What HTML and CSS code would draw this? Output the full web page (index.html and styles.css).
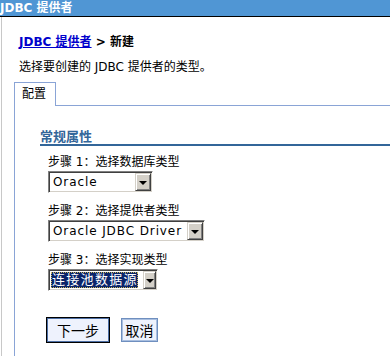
FILE: index.html
```html
<!DOCTYPE html>
<html>
<head>
<meta charset="utf-8">
<link rel="stylesheet" href="styles.css">
</head>
<body>
<div class="titlebar">JDBC 提供者</div>
<div class="page">
  <div class="crumb"><a href="#">JDBC 提供者</a> &gt; 新建</div>
  <div class="desc">选择要创建的 JDBC 提供者的类型。</div>
  <div class="tabs"><div class="tab">配置</div><div class="tabfill"></div></div>
  <div class="panel">
    <div class="heading">常规属性</div>
    <div class="field first">
      <div class="label">步骤 1：选择数据库类型</div>
      <div class="select w1"><span class="val">Oracle</span><span class="drop"><span class="tri"></span></span></div>
    </div>
    <div class="field">
      <div class="label">步骤 2：选择提供者类型</div>
      <div class="select w2"><span class="val">Oracle JDBC Driver</span><span class="drop"><span class="tri"></span></span></div>
    </div>
    <div class="field">
      <div class="label">步骤 3：选择实现类型</div>
      <div class="select w3"><span class="val sel"><span class="focus">连接池数据源</span></span><span class="drop"><span class="tri"></span></span></div>
    </div>
    <div class="buttons">
      <button class="btn primary">下一步</button>
      <button class="btn">取消</button>
    </div>
  </div>
</div>
</body>
</html>
```

FILE: styles.css
```css
html, body {
  margin: 0;
  height: 100%;
}
body {
  font-family: "DejaVu Sans", "Noto Sans CJK SC", sans-serif;
  font-size: 12px;
  background: #fff;
  color: #000;
  overflow: hidden;
}
.titlebar {
  height: 16px;
  line-height: 16px;
  background: #5096d4;
  border-bottom: 1px solid #000;
  color: #fff;
  font-weight: bold;
  font-size: 12px;
}
.page {
  margin-left: 1px;
  border-left: 1px solid #c8c8c8;
  height: 339px;
  padding-left: 17px;
}
.crumb {
  padding-top: 17px;
  line-height: 16px;
  font-weight: bold;
}
.crumb a {
  color: #0000cc;
  text-decoration: underline;
}
.desc {
  margin-top: 9px;
  line-height: 16px;
}
.tabs {
  display: flex;
  margin-top: 7px;
  margin-left: -5px;
}
.tab {
  border: 1px solid #8aa4d6;
  border-bottom: none;
  width: 33px;
  height: 23px;
  line-height: 22px;
  padding-left: 7px;
}
.tabfill {
  flex: 1;
  border-bottom: 1px solid #8aa4d6;
}
.panel {
  margin-left: -5px;
  border-left: 1px solid #8aa4d6;
  padding-left: 25px;
  height: 260px;
}
.heading {
  padding-top: 23px;
  font-size: 13px;
  font-weight: bold;
  color: #336699;
  line-height: 15px;
  border-bottom: 2px solid #336699;
}
.field {
  padding-left: 8px;
  margin-top: 10px;
}
.field.first {
  margin-top: 8px;
}
.label {
  line-height: 16px;
}
.select {
  margin-top: 1px;
  display: flex;
  height: 18px;
  background: #fff;
  border-top: 1px solid #808080;
  border-left: 1px solid #808080;
  border-right: 1px solid #fff;
  border-bottom: 1px solid #fff;
  box-shadow: inset 1px 1px 0 #404040, inset -1px -1px 0 #d4d0c8;
  padding: 1px;
  box-sizing: content-box;
}
.w1 { width: 101px; }
.w2 { width: 153px; }
.w3 { width: 106px; }
.val {
  flex: 1;
  line-height: 18px;
  padding-left: 3px;
  letter-spacing: 0.9px;
  white-space: nowrap;
  overflow: hidden;
}
.val.sel {
  padding: 1px 2px 1px 1px;
  flex: 0 0 auto;
  width: 87px;
  margin-right: 3px;
  line-height: 16px;
}
.focus {
  display: block;
  background: #0a246a;
  color: #fff;
  outline: 1px dotted #c8b45a;
  outline-offset: -1px;
  font-size: 13px;
  letter-spacing: 1.3px;
  padding-left: 1px;
  height: 16px;
  white-space: nowrap;
}
.drop {
  width: 12px;
  height: 14px;
  background: #d4d0c8;
  border-top: 1px solid #d4d0c8;
  border-left: 1px solid #d4d0c8;
  border-right: 1px solid #404040;
  border-bottom: 1px solid #404040;
  box-shadow: inset 1px 1px 0 #fff, inset -1px -1px 0 #808080;
  padding: 1px;
  display: flex;
  align-items: center;
  justify-content: center;
}
.tri {
  width: 0;
  height: 0;
  border-left: 4px solid transparent;
  border-right: 4px solid transparent;
  border-top: 4px solid #000;
  margin-top: 1px;
}
.buttons {
  margin-top: 26px;
  padding-left: 6px;
  display: flex;
  align-items: center;
  gap: 11px;
}
.btn {
  font-family: "DejaVu Sans", "Noto Sans CJK SC", sans-serif;
  font-size: 14px;
  background: #eef2fd;
  color: #000;
  margin: 0;
  padding: 0;
  letter-spacing: 0;
}
.btn.primary {
  width: 64px;
  height: 26px;
  border: 1px solid #000;
  box-shadow: inset 0 0 0 1px #4d6fa5;
}
.btn:not(.primary) {
  width: 37px;
  height: 24px;
  border: 1px solid #6f8fbf;
  box-shadow: inset 0 0 0 1px #a9bfe0;
}
```
